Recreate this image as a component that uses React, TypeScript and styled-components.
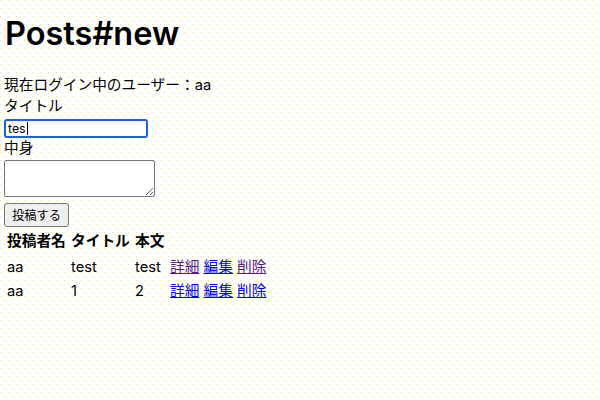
import React from "react";
import styled, { createGlobalStyle } from "styled-components";

const Global = createGlobalStyle`
  html, body {
    margin: 0;
    padding: 0;
    background-color: #ffffff;
    background-image:
      conic-gradient(at 1px 1px, transparent 75%, #f4ec50 0),
      conic-gradient(at 1px 1px, transparent 75%, #f4ec50 0);
    background-size: 8px 8px, 8px 8px;
    background-position: 0 0, 4px 4px;
    min-height: 400px;
  }
  body {
    font-family: Inter, "Noto Sans CJK JP", sans-serif;
    color: #000;
  }
`;

const Page = styled.div`
  display: flex;
  flex-direction: column;
  align-items: flex-start;
  padding-left: 4px;
  font-size: 14.7px;
  line-height: 21px;
`;

const Title = styled.h1`
  margin: 14px 0 0 1px;
  font-family: Inter, sans-serif;
  font-size: 32.5px;
  line-height: 40px;
  font-weight: 600;
`;

const Line = styled.div<{ $mt?: number }>`
  margin-top: ${(p) => p.$mt ?? 0}px;
  white-space: nowrap;
`;

const TextBox = styled.div`
  box-sizing: border-box;
  margin-top: 2px;
  width: 144px;
  height: 19px;
  border: 2px solid #1d62d4;
  border-radius: 3px;
  background: #fff;
  display: flex;
  align-items: center;
  padding-left: 2px;
  font-size: 12.3px;
  line-height: 15px;
`;

const Caret = styled.span`
  display: inline-block;
  width: 1px;
  height: 13px;
  background: #000;
  margin-left: 1px;
`;

const Area = styled.textarea`
  box-sizing: border-box;
  margin: 1px 0 0 0;
  width: 151px;
  height: 37px;
  border: 1px solid #767676;
  border-radius: 2px;
  background: #fff;
  font-family: inherit;
  padding: 2px;
`;

const Submit = styled.button`
  box-sizing: border-box;
  margin-top: 6px;
  width: 65px;
  height: 24px;
  padding: 0;
  border: 1px solid #767676;
  border-radius: 3px;
  background: #efefef;
  font-family: "Noto Sans CJK JP", sans-serif;
  font-size: 12.3px;
  color: #000;
`;

const Table = styled.table`
  margin-top: 1px;
  border-spacing: 2px;
  table-layout: fixed;
  font-size: 14.7px;
  line-height: 20px;
`;

const Th = styled.th<{ $w?: number }>`
  text-align: left;
  font-weight: 700;
  padding: 1px 1px 3px 1px;
  width: ${(p) => (p.$w ? `${p.$w}px` : "auto")};
  white-space: nowrap;
`;

const Td = styled.td`
  padding: 1px;
  white-space: nowrap;
  text-align: left;
`;

const Link = styled.a<{ $visited?: boolean }>`
  color: ${(p) => (p.$visited ? "#551a8b" : "#0000ee")};
  text-decoration: underline;
`;

const rows = [
  { user: "aa", title: "test", body: "test", visited: [true, false, true] },
  { user: "aa", title: "1", body: "2", visited: [false, false, false] },
];

export default function App() {
  return (
    <>
      <Global />
      <Page>
        <Title>Posts#new</Title>
        <Line $mt={21}>現在ログイン中のユーザー：aa</Line>
        <Line>タイトル</Line>
        <TextBox>
          tes
          <Caret />
        </TextBox>
        <Line>中身</Line>
        <Area />
        <Submit>投稿する</Submit>
        <Table>
          <thead>
            <tr>
              <Th $w={60}>投稿者名</Th>
              <Th $w={60}>タイトル</Th>
              <Th $w={31}>本文</Th>
              <Th $w={100}></Th>
            </tr>
          </thead>
          <tbody>
            {rows.map((r, i) => (
              <tr key={i}>
                <Td>{r.user}</Td>
                <Td>{r.title}</Td>
                <Td>{r.body}</Td>
                <Td>
                  <Link href="#" $visited={r.visited[0]}>詳細</Link>{" "}
                  <Link href="#" $visited={r.visited[1]}>編集</Link>{" "}
                  <Link href="#" $visited={r.visited[2]}>削除</Link>
                </Td>
              </tr>
            ))}
          </tbody>
        </Table>
      </Page>
    </>
  );
}
